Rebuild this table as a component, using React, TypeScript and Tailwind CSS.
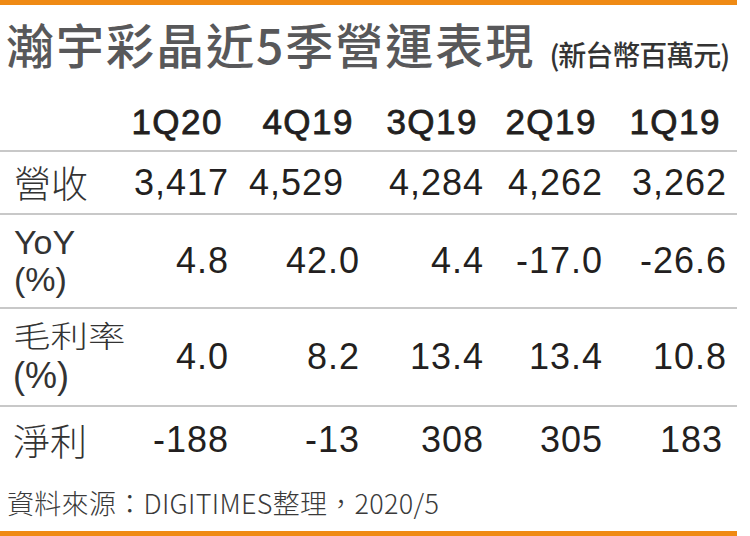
import React from "react";

const num = { fontFamily: '"Liberation Sans", Arial, sans-serif' } as React.CSSProperties;
const cjk = { fontFamily: '"Noto Sans CJK TC", "Noto Sans CJK SC", sans-serif' } as React.CSSProperties;

const cols = ["w-[99px]", "w-[131px]", "w-[124px]", "w-[119px]", "w-[124px]"];

function Cells({ values, pads }: { values: string[]; pads?: string[] }) {
  return (
    <>
      {values.map((v, i) => (
        <div
          key={i}
          className={`${cols[i]} shrink-0 text-right text-[36px] leading-none tracking-[1px] text-[#231f20] ${pads ? pads[i] : ""}`}
          style={num}
        >
          {v}
        </div>
      ))}
    </>
  );
}

export default function App() {
  const headers = ["1Q20", "4Q19", "3Q19", "2Q19", "1Q19"];
  return (
    <div className="w-[750px] h-[536px] bg-white flex flex-col overflow-hidden">
      <div className="w-[737px] h-[5px] bg-[#ef8a14] shrink-0" />
      <div className="flex items-start pl-[6px] pt-[14px] h-[80px] shrink-0">
        <span className="text-[48px] leading-none font-medium text-[#58585a] tracking-[2px]" style={cjk}>
          瀚宇彩晶近5季營運表現
        </span>
        <span className="ml-[14px] mt-[21px] text-[28px] leading-none font-medium text-[#333] tracking-[-1px]" style={cjk}>
          (新台幣百萬元)
        </span>
      </div>
      <div className="w-[737px] flex items-center pt-[8px] h-[67px] border-b-2 border-[#c8c8c8] shrink-0">
        <div className="w-[130px] shrink-0" />
        {headers.map((h, i) => (
          <div
            key={h}
            className={`${cols[i]} shrink-0 text-right pr-[6px] text-[35px] leading-none text-[#231f20] tracking-[1.5px] [-webkit-text-stroke:0.8px_#231f20]`}
            style={num}
          >
            {h}
          </div>
        ))}
      </div>
      <div className="w-[737px] flex items-center h-[63px] border-b-2 border-[#c8c8c8] shrink-0">
        <div className="w-[130px] shrink-0 pl-[14px] text-[37px] leading-none font-light text-[#333]" style={cjk}>
          營收
        </div>
        <Cells values={["3,417", "4,529", "4,284", "4,262", "3,262"]} pads={["", "pr-[16px]", "", "", ""]} />
      </div>
      <div className="w-[737px] flex items-center h-[94px] border-b-2 border-[#c8c8c8] shrink-0">
        <div className="w-[130px] shrink-0 pl-[14px] text-[34px] leading-[37px] text-[#333]" style={num}>
          <div>YoY</div>
          <div>(%)</div>
        </div>
        <Cells values={["4.8", "42.0", "4.4", "-17.0", "-26.6"]} />
      </div>
      <div className="w-[737px] flex items-center h-[98px] border-b-2 border-[#c8c8c8] shrink-0">
        <div className="w-[130px] shrink-0 self-start mt-[3px] pl-[13px] text-[#333]">
          <div className="text-[30px] leading-[44px] font-light origin-left scale-x-[1.25] whitespace-nowrap" style={cjk}>
            毛利率
          </div>
          <div className="text-[36px] leading-[40px]" style={num}>
            (%)
          </div>
        </div>
        <Cells values={["4.0", "8.2", "13.4", "13.4", "10.8"]} />
      </div>
      <div className="w-[737px] flex items-center h-[66px] shrink-0">
        <div className="w-[130px] shrink-0 pl-[13px] text-[37px] leading-none font-light text-[#333]" style={cjk}>
          淨利
        </div>
        <Cells values={["-188", "-13", "308", "305", "183"]} pads={["", "", "", "", "pr-[4px]"]} />
      </div>
      <div className="flex items-center pl-[7px] h-[58px] shrink-0 text-[27px] leading-none font-light tracking-[0.3px] text-[#3a3a3a]" style={cjk}>
        資料來源：DIGITIMES整理，2020/5
      </div>
      <div className="w-[737px] h-[5px] bg-[#ef8a14] shrink-0 mt-auto" />
    </div>
  );
}
